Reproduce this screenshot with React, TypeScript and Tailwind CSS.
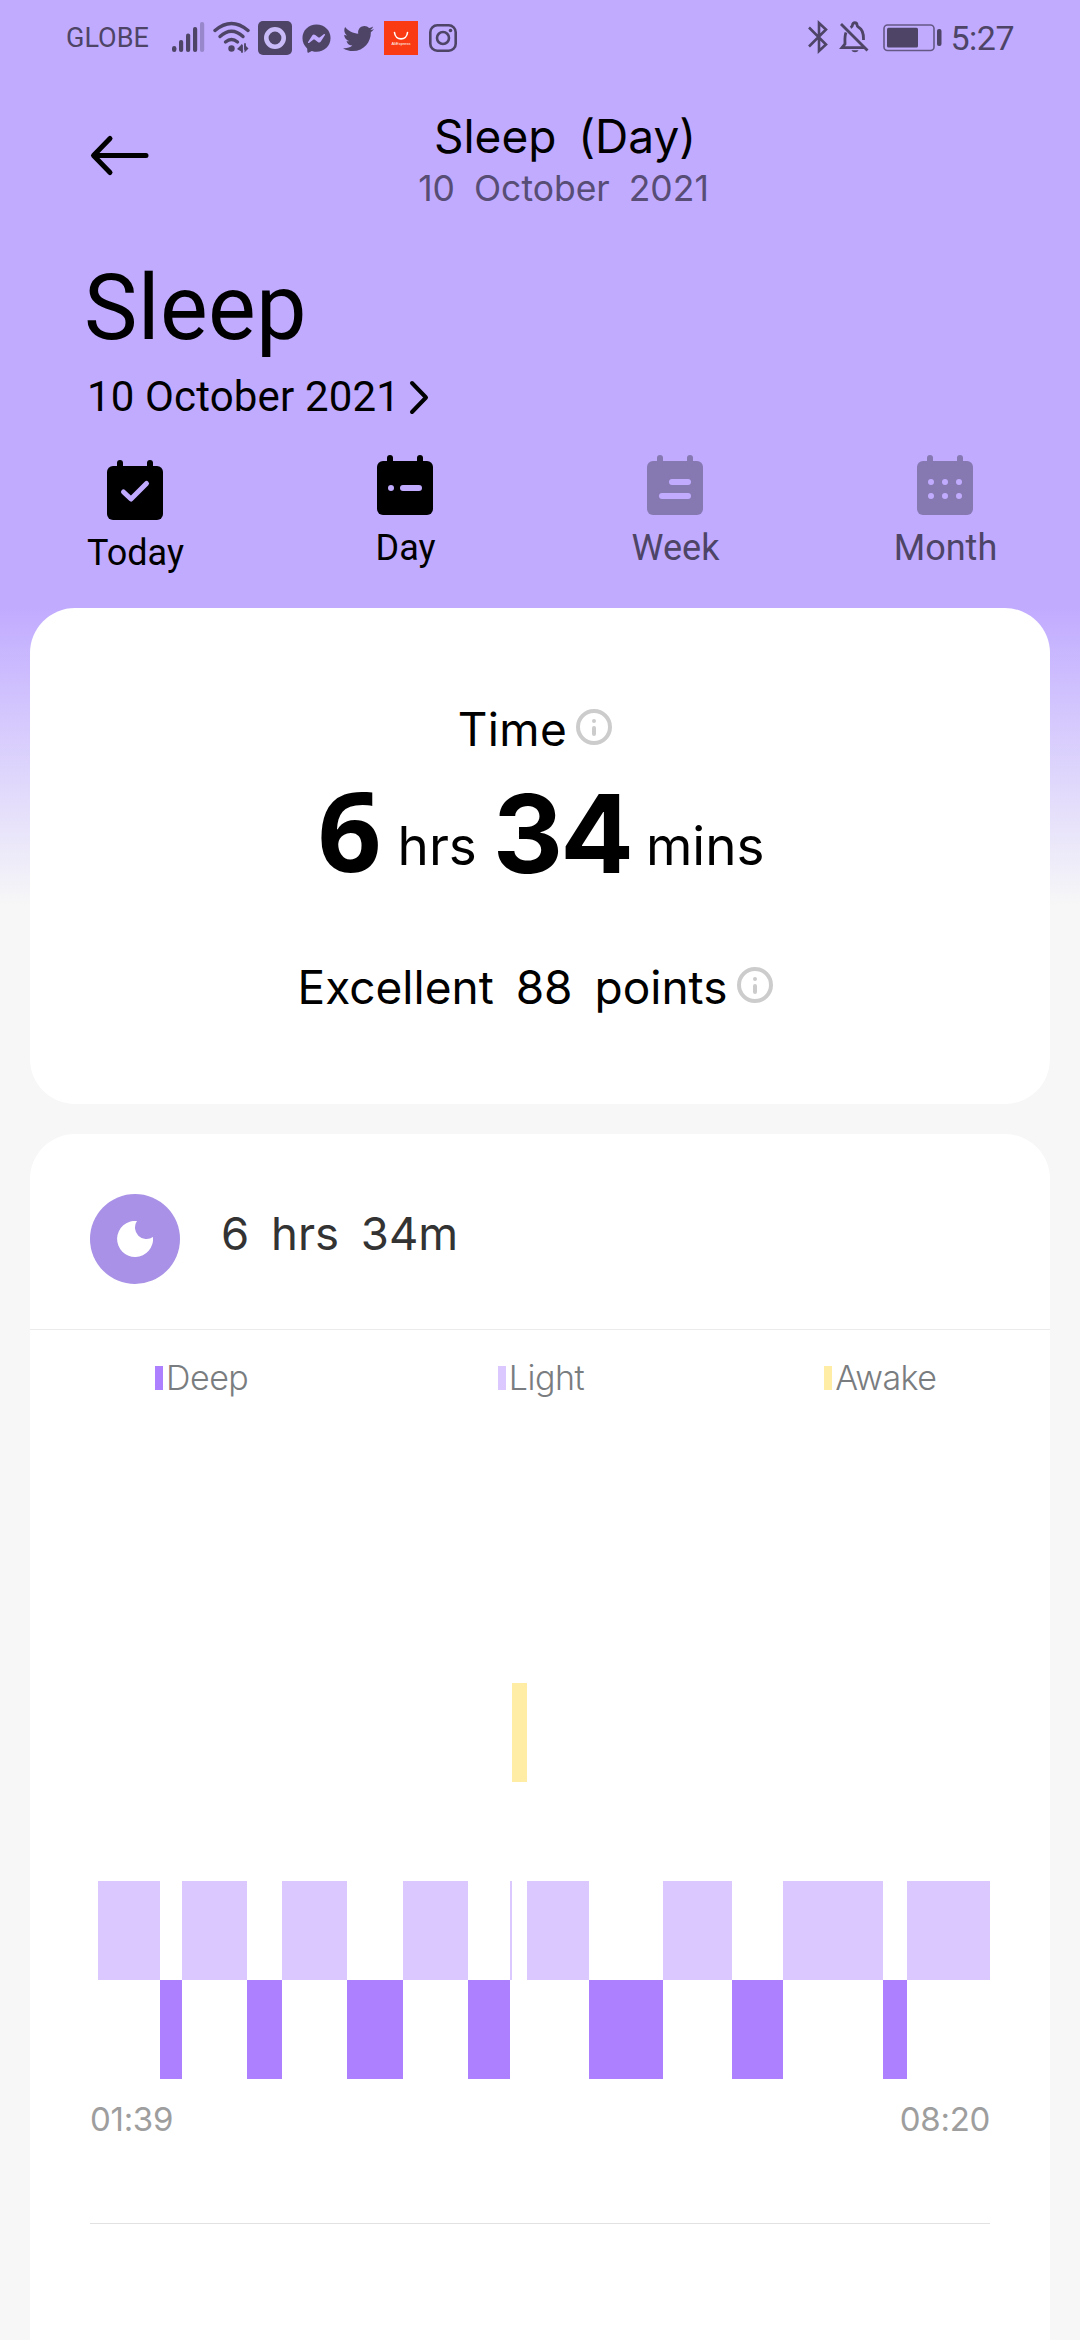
import type { ReactNode } from 'react';
import { FaFacebookMessenger, FaTwitter } from 'react-icons/fa';

type Stage = 'deep' | 'light' | 'awake';

// widths are in chart pixels, left to right over the night
const segments: { stage: Stage; width: number }[] = [
  { stage: 'light', width: 62 },
  { stage: 'deep', width: 22 },
  { stage: 'light', width: 65 },
  { stage: 'deep', width: 35 },
  { stage: 'light', width: 65 },
  { stage: 'deep', width: 56 },
  { stage: 'light', width: 65 },
  { stage: 'deep', width: 42 },
  { stage: 'light', width: 2 },
  { stage: 'awake', width: 15 },
  { stage: 'light', width: 62 },
  { stage: 'deep', width: 74 },
  { stage: 'light', width: 69 },
  { stage: 'deep', width: 51 },
  { stage: 'light', width: 100 },
  { stage: 'deep', width: 24 },
  { stage: 'light', width: 83 },
];

const stageClass: Record<Stage, string> = {
  deep: 'mt-[297px] bg-[#ad80ff]',
  light: 'mt-[198px] bg-[#dac8ff]',
  awake: 'bg-[#ffeda6]',
};

function StatusBar() {
  return (
    <div className="flex h-[76px] shrink-0 items-start pl-[66px] pr-[66px] text-[#4d4466]">
      <span className="mt-[25px] w-[105px] font-[Roboto] text-[27px] leading-none">GLOBE</span>
      <svg className="mt-[20px]" width="34" height="34" viewBox="0 0 34 34" fill="currentColor">
        <rect x="1" y="26" width="4.4" height="6" rx="2.2" />
        <rect x="8" y="20" width="4.2" height="12" rx="2" />
        <rect x="15" y="13.5" width="4.2" height="18.5" rx="2" />
        <rect x="22" y="7" width="4.2" height="25" rx="2" />
        <rect x="29" y="2" width="4.2" height="30" rx="2" opacity="0.35" />
      </svg>
      <svg className="ml-[7px] mt-[20px]" width="40" height="34" viewBox="0 0 40 34" fill="none" stroke="currentColor" strokeWidth="3.4" strokeLinecap="round">
        <path d="M3 10.5Q19.500-3.500 36 10.500" />
        <path d="M8 16.500Q19.500 6 31 16.500" />
        <path d="M13.500 22Q19.500 17 25.500 22" />
        <circle cx="19.500" cy="28.500" r="3.200" fill="currentColor" stroke="none" />
        <path d="M25 29l5-5v8zM36.500 28.500l-4-4v8z" fill="currentColor" stroke="none" />
        <path d="M30 25.500v6.500M33 24v5" strokeWidth="1.800" />
      </svg>
      <svg className="ml-[6px] mt-[21px]" width="34" height="34" viewBox="0 0 34 34">
        <rect width="34" height="34" rx="5" fill="currentColor" />
        <circle cx="17" cy="17" r="8.700" fill="#4d4466" stroke="#c9bbf8" strokeWidth="4.600" />
      </svg>
      <FaFacebookMessenger className="ml-[10px] mt-[23.500px] size-[29px]" />
      <FaTwitter className="ml-[12px] mt-[22.500px] size-[31px]" />
      <div className="ml-[10px] mt-[21px] flex size-[34px] flex-col items-center bg-[#f93a12] text-white">
        <svg className="mt-[10px]" width="16" height="10" viewBox="0 0 16 10" fill="none" stroke="currentColor" strokeWidth="1.600" strokeLinecap="round">
          <path d="M1.500 1.500c.8 8.500 12.200 8.500 13 0" />
        </svg>
        <span className="mt-px font-['Liberation_Sans'] text-[4px] leading-none">AliExpress</span>
      </div>
      <svg className="ml-[11px] mt-[24px]" width="28" height="28" viewBox="0 0 28 28" fill="none" stroke="currentColor" strokeWidth="2.600">
        <rect x="1.300" y="1.300" width="25.400" height="25.400" rx="7" />
        <circle cx="14" cy="14" r="6" />
        <circle cx="21.500" cy="6.500" r="1.800" fill="currentColor" stroke="none" />
      </svg>

      <div className="ml-auto flex items-start">
        <svg className="mt-[20px]" width="22" height="34" viewBox="0 0 22 34" fill="none" stroke="currentColor" strokeWidth="2.600" strokeLinejoin="miter">
          <path d="M2 7.500L19 24.500 12 31V3l7 6.500L2 26.500" />
        </svg>
        <svg className="ml-[10px] mt-[20px]" width="31" height="34" viewBox="0 0 31 34" fill="none" stroke="currentColor" strokeWidth="2.800">
          <path d="M2 4L28.500 30.500" />
          <path d="M7 12.500C5.500 16 6 20 6 24l-3 3.700h22" />
          <path d="M11.500 7.500c1.500-.8 2-1 2-2.500 0-3 4.500-3 4.500 0 0 1.500.5 1.700 2 2.500 5 3 4.500 8.500 4.500 12.500" />
          <path d="M12.500 30.300h7c-.8 2.500-6.200 2.500-7 0z" fill="currentColor" stroke="none" />
        </svg>
        <svg className="ml-[13px] mt-[24px]" width="60" height="28" viewBox="0 0 60 28">
          <rect x="1" y="1" width="50" height="25.500" rx="3.500" fill="none" stroke="currentColor" strokeWidth="1.600" opacity="0.800" />
          <rect x="4" y="3.800" width="31" height="19.700" rx="1.500" fill="currentColor" />
          <rect x="54" y="5" width="4.500" height="17" rx="2" fill="currentColor" />
        </svg>
        <span className="ml-[7px] mt-[20.500px] font-[Roboto] text-[34px] leading-none tracking-[-0.5px]">5:27</span>
      </div>
    </div>
  );
}

function InfoIcon({ className }: { className: string }) {
  return (
    <svg className={className} width="36" height="36" viewBox="0 0 36 36" fill="none" stroke="#cccccc" strokeLinecap="round">
      <circle cx="18" cy="18" r="16" strokeWidth="4" />
      <path d="M18 12v0M18 19v6" strokeWidth="4" />
    </svg>
  );
}

function Tab({ label, active, className, children }: { label: string; active?: boolean; className?: string; children: ReactNode }) {
  return (
    <div className={`flex flex-col items-center ${active ? 'text-black' : 'text-[#4d4466]'} ${className ?? ''}`}>
      <svg className={active ? 'text-black' : 'text-[#8678b0]'} width="56" height="60" viewBox="0 0 56 60" fill="currentColor">
        <rect y="6" width="56" height="54" rx="6" />
        <rect x="10" width="6" height="12" rx="3" />
        <rect x="40" width="6" height="12" rx="3" />
        <g fill="#c1abff">{children}</g>
      </svg>
      <span className="ml-px mt-[15px] font-[Roboto] text-[36px] leading-none">{label}</span>
    </div>
  );
}

function Legend({ label, color }: { label: string; color: string }) {
  return (
    <div className="flex items-start justify-center gap-[3px]">
      <span className={`mt-[5px] h-[24px] w-[8px] ${color}`} />
      <span className="font-[Inter] text-[34px] font-light leading-none tracking-[-0.5px] text-[#7a7d80]">{label}</span>
    </div>
  );
}

export default function App() {
  return (
    <div className="flex h-[2340px] w-[1080px] flex-col overflow-hidden bg-[#f7f7f7] bg-linear-to-b from-[#c1abff] from-[608px] to-[#f7f7f7] to-[906px] text-black">
      <header className="flex h-[608px] shrink-0 flex-col">
        <StatusBar />
        <div className="flex h-[129px] shrink-0 items-start pl-[90px] pr-[100px]">
          <svg className="mt-[58px]" width="60" height="44" viewBox="0 0 60 44" fill="none" stroke="#000" strokeWidth="5" strokeLinecap="round" strokeLinejoin="round">
            <path d="M56 21.500H4M20 4.500L3.500 21.500 20 38.500" />
          </svg>
          <div className="flex flex-1 flex-col items-center pt-[37px] font-[Inter]">
            <div className="text-[46px] leading-none [word-spacing:9px]">Sleep (Day)</div>
            <div className="mr-[3px] mt-[12px] text-[35.500px] leading-none text-[#574d75] [word-spacing:9px]">10 October 2021</div>
          </div>
        </div>
        <h1 className="ml-[84px] mt-[59px] font-[Roboto] text-[90px] leading-none tracking-[0.3px]">Sleep</h1>
        <div className="ml-[87px] mt-[22px] flex items-start font-[Roboto] text-[42px] leading-none tracking-[0.15px]">
          10 October 2021
          <svg className="ml-[8px] mt-[3px]" width="24" height="36" viewBox="0 0 24 36" fill="none" stroke="#000" strokeWidth="4" strokeLinecap="round" strokeLinejoin="round">
            <path d="M4 4l14 14.500L4 33" />
          </svg>
        </div>
        <nav className="mt-[37px] grid grid-cols-4">
          <Tab label="Today" active className="pt-[5px]">
            <path d="M16.500 32l7.500 7 15.500-15.500" fill="none" stroke="#c1abff" strokeWidth="5" strokeLinecap="round" strokeLinejoin="round" />
          </Tab>
          <Tab label="Day" active>
            <circle cx="14" cy="33" r="3" />
            <rect x="23" y="30" width="22" height="6" rx="3" />
          </Tab>
          <Tab label="Week">
            <rect x="22" y="24" width="22" height="6" rx="3" />
            <rect x="12" y="38" width="32" height="6" rx="3" />
          </Tab>
          <Tab label="Month">
            {[14, 28, 42].map((x) => (
              <g key={x}>
                <circle cx={x} cy="27" r="3" />
                <circle cx={x} cy="41" r="3" />
              </g>
            ))}
          </Tab>
        </nav>
      </header>

      <section className="mx-[30px] flex h-[496px] shrink-0 flex-col items-center rounded-[45px] bg-white pt-[98px] font-[Inter]">
        <div className="mr-[10px] flex items-start text-[46px] leading-none tracking-[0.4px]">
          Time
          <InfoIcon className="ml-[9px] mt-[3px]" />
        </div>
        <div className="ml-[2px] mt-[21px] flex h-[112px] items-start leading-none">
          <span className="font-['Noto_Sans'] text-[112px] font-bold leading-none">6</span>
          <span className="ml-[16px] mt-[47px] text-[53px] leading-none">hrs</span>
          <span className="ml-[16px] mt-[6px] text-[109px] font-bold leading-none tracking-[-3px]">34</span>
          <span className="ml-[15px] mt-[47px] text-[53px] leading-none">mins</span>
        </div>
        <div className="mr-[9px] mt-[79px] flex items-start text-[46px] leading-none [word-spacing:9px]">
          Excellent 88 points
          <InfoIcon className="ml-[10px] mt-[3px]" />
        </div>
      </section>

      <section className="mx-[30px] mt-[30px] flex flex-1 flex-col rounded-t-[45px] bg-white font-[Inter]">
        <div className="flex h-[196px] shrink-0 items-start border-b border-[#ebebeb] pl-[60px] pt-[60px]">
          <div className="flex size-[90px] items-center justify-center rounded-full bg-[#a891e6]">
            <svg width="36" height="36" viewBox="0 0 36 36" fill="#fff">
              <path d="M20 0A18 18 0 1 0 36 16A11.500 11.500 0 0 1 20 0Z" />
            </svg>
          </div>
          <div className="ml-[41px] mt-[17px] text-[45.500px] leading-none text-[#333333] [word-spacing:9px]">6 hrs 34m</div>
        </div>

        <div className="mt-[31px] grid shrink-0 grid-cols-3 pl-[2px]">
          <Legend label="Deep" color="bg-[#ad80ff]" />
          <Legend label="Light" color="bg-[#dac8ff]" />
          <Legend label="Awake" color="bg-[#ffeda6]" />
        </div>

        <div className="ml-[68px] mt-[288px] flex h-[396px] shrink-0 items-start">
          {segments.map((segment, i) => (
            <div key={i} className={`h-[99px] shrink-0 ${stageClass[segment.stage]}`} style={{ width: segment.width }} />
          ))}
        </div>
        <div className="mx-[60px] flex h-[145px] shrink-0 items-start justify-between border-b border-[#e2e2e2] pt-[24px] text-[33px] leading-none tracking-[-0.3px] text-[#9e9e9e]">
          <span>01:39</span>
          <span>08:20</span>
        </div>
      </section>
    </div>
  );
}
